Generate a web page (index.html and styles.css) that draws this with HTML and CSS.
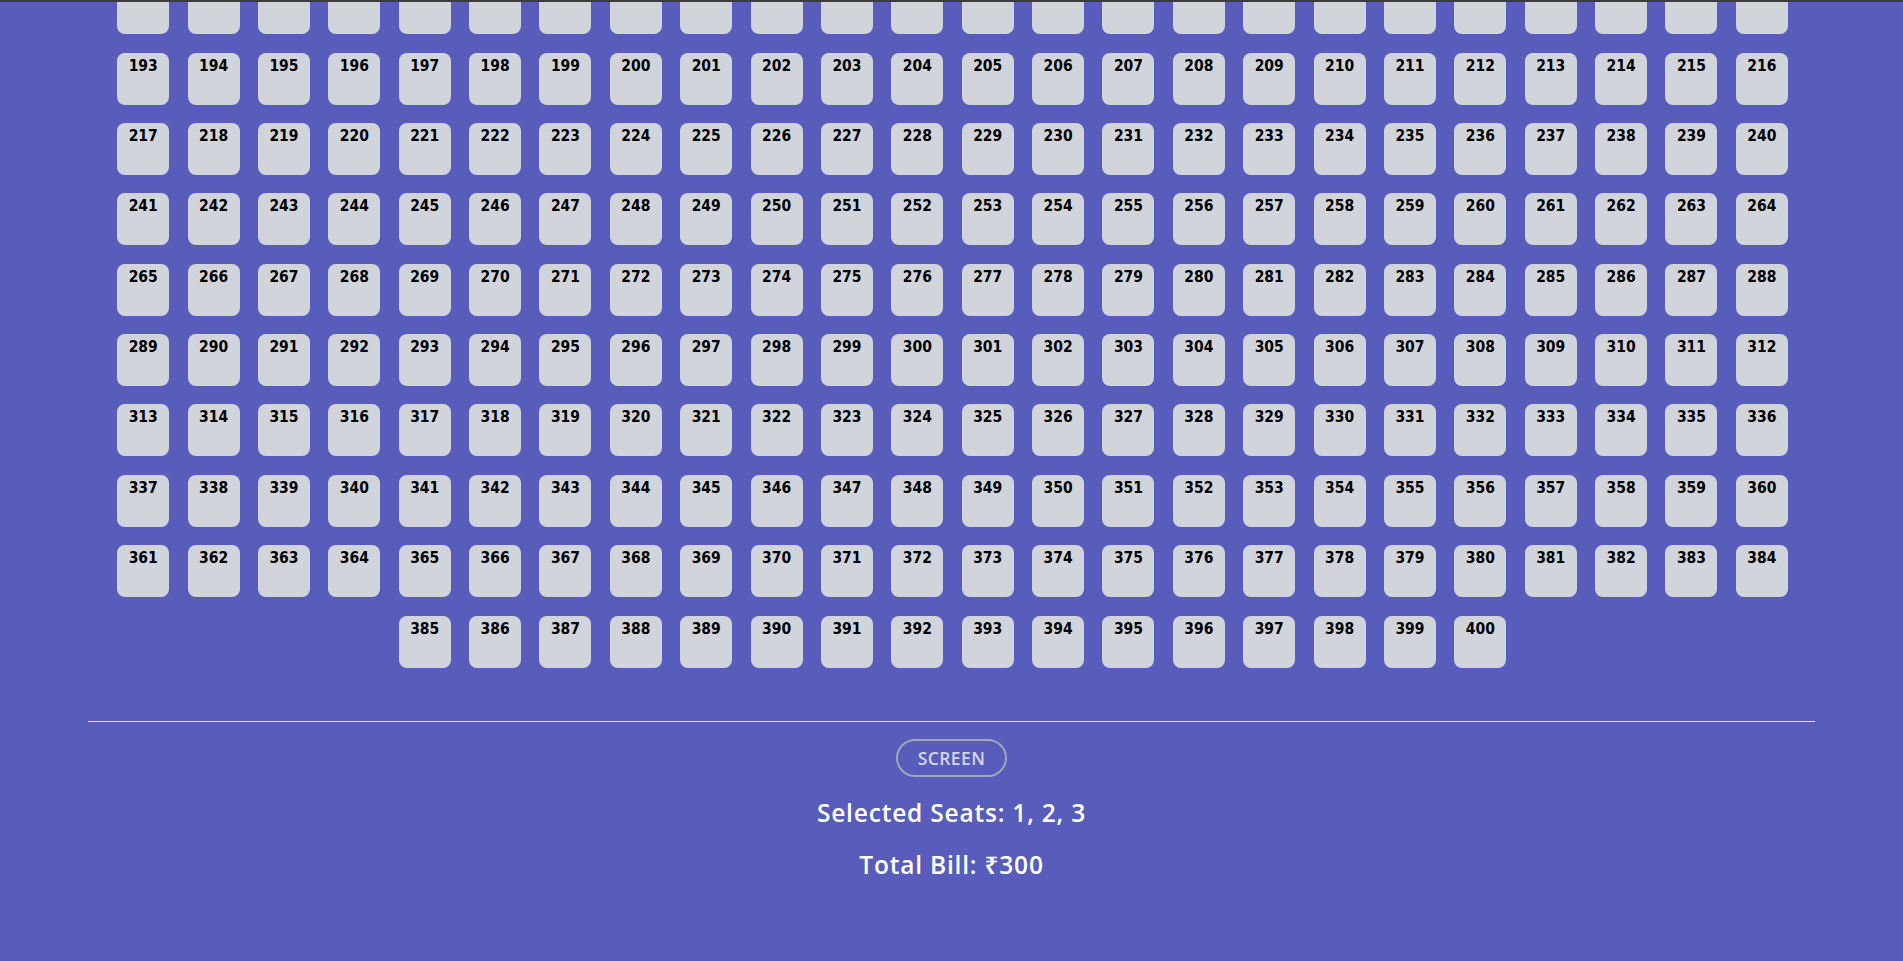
FILE: index.html
```html
<!DOCTYPE html>
<html lang="en">
<head>
<meta charset="utf-8">
<title>Seat Booking</title>
<link rel="stylesheet" href="styles.css">
</head>
<body>
<div class="topbar"></div>
<main class="page">
  <section class="seat-map">
    <div class="seat">169</div><div class="seat">170</div><div class="seat">171</div><div class="seat">172</div><div class="seat">173</div><div class="seat">174</div><div class="seat">175</div><div class="seat">176</div><div class="seat">177</div><div class="seat">178</div><div class="seat">179</div><div class="seat">180</div><div class="seat">181</div><div class="seat">182</div><div class="seat">183</div><div class="seat">184</div><div class="seat">185</div><div class="seat">186</div><div class="seat">187</div><div class="seat">188</div><div class="seat">189</div><div class="seat">190</div><div class="seat">191</div><div class="seat">192</div>
    <div class="seat">193</div><div class="seat">194</div><div class="seat">195</div><div class="seat">196</div><div class="seat">197</div><div class="seat">198</div><div class="seat">199</div><div class="seat">200</div><div class="seat">201</div><div class="seat">202</div><div class="seat">203</div><div class="seat">204</div><div class="seat">205</div><div class="seat">206</div><div class="seat">207</div><div class="seat">208</div><div class="seat">209</div><div class="seat">210</div><div class="seat">211</div><div class="seat">212</div><div class="seat">213</div><div class="seat">214</div><div class="seat">215</div><div class="seat">216</div>
    <div class="seat">217</div><div class="seat">218</div><div class="seat">219</div><div class="seat">220</div><div class="seat">221</div><div class="seat">222</div><div class="seat">223</div><div class="seat">224</div><div class="seat">225</div><div class="seat">226</div><div class="seat">227</div><div class="seat">228</div><div class="seat">229</div><div class="seat">230</div><div class="seat">231</div><div class="seat">232</div><div class="seat">233</div><div class="seat">234</div><div class="seat">235</div><div class="seat">236</div><div class="seat">237</div><div class="seat">238</div><div class="seat">239</div><div class="seat">240</div>
    <div class="seat">241</div><div class="seat">242</div><div class="seat">243</div><div class="seat">244</div><div class="seat">245</div><div class="seat">246</div><div class="seat">247</div><div class="seat">248</div><div class="seat">249</div><div class="seat">250</div><div class="seat">251</div><div class="seat">252</div><div class="seat">253</div><div class="seat">254</div><div class="seat">255</div><div class="seat">256</div><div class="seat">257</div><div class="seat">258</div><div class="seat">259</div><div class="seat">260</div><div class="seat">261</div><div class="seat">262</div><div class="seat">263</div><div class="seat">264</div>
    <div class="seat">265</div><div class="seat">266</div><div class="seat">267</div><div class="seat">268</div><div class="seat">269</div><div class="seat">270</div><div class="seat">271</div><div class="seat">272</div><div class="seat">273</div><div class="seat">274</div><div class="seat">275</div><div class="seat">276</div><div class="seat">277</div><div class="seat">278</div><div class="seat">279</div><div class="seat">280</div><div class="seat">281</div><div class="seat">282</div><div class="seat">283</div><div class="seat">284</div><div class="seat">285</div><div class="seat">286</div><div class="seat">287</div><div class="seat">288</div>
    <div class="seat">289</div><div class="seat">290</div><div class="seat">291</div><div class="seat">292</div><div class="seat">293</div><div class="seat">294</div><div class="seat">295</div><div class="seat">296</div><div class="seat">297</div><div class="seat">298</div><div class="seat">299</div><div class="seat">300</div><div class="seat">301</div><div class="seat">302</div><div class="seat">303</div><div class="seat">304</div><div class="seat">305</div><div class="seat">306</div><div class="seat">307</div><div class="seat">308</div><div class="seat">309</div><div class="seat">310</div><div class="seat">311</div><div class="seat">312</div>
    <div class="seat">313</div><div class="seat">314</div><div class="seat">315</div><div class="seat">316</div><div class="seat">317</div><div class="seat">318</div><div class="seat">319</div><div class="seat">320</div><div class="seat">321</div><div class="seat">322</div><div class="seat">323</div><div class="seat">324</div><div class="seat">325</div><div class="seat">326</div><div class="seat">327</div><div class="seat">328</div><div class="seat">329</div><div class="seat">330</div><div class="seat">331</div><div class="seat">332</div><div class="seat">333</div><div class="seat">334</div><div class="seat">335</div><div class="seat">336</div>
    <div class="seat">337</div><div class="seat">338</div><div class="seat">339</div><div class="seat">340</div><div class="seat">341</div><div class="seat">342</div><div class="seat">343</div><div class="seat">344</div><div class="seat">345</div><div class="seat">346</div><div class="seat">347</div><div class="seat">348</div><div class="seat">349</div><div class="seat">350</div><div class="seat">351</div><div class="seat">352</div><div class="seat">353</div><div class="seat">354</div><div class="seat">355</div><div class="seat">356</div><div class="seat">357</div><div class="seat">358</div><div class="seat">359</div><div class="seat">360</div>
    <div class="seat">361</div><div class="seat">362</div><div class="seat">363</div><div class="seat">364</div><div class="seat">365</div><div class="seat">366</div><div class="seat">367</div><div class="seat">368</div><div class="seat">369</div><div class="seat">370</div><div class="seat">371</div><div class="seat">372</div><div class="seat">373</div><div class="seat">374</div><div class="seat">375</div><div class="seat">376</div><div class="seat">377</div><div class="seat">378</div><div class="seat">379</div><div class="seat">380</div><div class="seat">381</div><div class="seat">382</div><div class="seat">383</div><div class="seat">384</div>
    <div class="seat">385</div><div class="seat">386</div><div class="seat">387</div><div class="seat">388</div><div class="seat">389</div><div class="seat">390</div><div class="seat">391</div><div class="seat">392</div><div class="seat">393</div><div class="seat">394</div><div class="seat">395</div><div class="seat">396</div><div class="seat">397</div><div class="seat">398</div><div class="seat">399</div><div class="seat">400</div>
  </section>
  <hr class="divider">
  <section class="summary">
    <div class="screen-pill">SCREEN</div>
    <p class="summary-line">Selected Seats: 1, 2, 3</p>
    <p class="summary-line">Total Bill: ₹300</p>
  </section>
</main>
</body>
</html>
```
FILE: styles.css
```css
* { box-sizing: border-box; }

html, body {
  margin: 0;
  padding: 0;
  background: #585cba;
}

body {
  font-family: "Open Sans", "Noto Sans", sans-serif;
  color: #ffffff;
  min-height: 961px;
}

.topbar {
  position: fixed;
  top: 0;
  left: 0;
  right: 0;
  height: 2px;
  background: #3c3c3c;
  z-index: 10;
}

.page {
  padding: 0 88px 60px;
}

.seat-map {
  display: flex;
  flex-wrap: wrap;
  justify-content: center;
  margin-top: -27px;
  padding-left: 2px;
}

.seat {
  width: 52px;
  height: 52px;
  margin: 9.2px;
  border-radius: 8px;
  background: #d1d5db;
  color: #000000;
  font-family: "DejaVu Sans Condensed", "DejaVu Sans", sans-serif;
  font-stretch: semi-condensed;
  font-weight: 700;
  font-size: 15.5px;
  line-height: 18px;
  text-align: center;
  padding-top: 4px;
}

.divider {
  margin: 44px 0 0;
  border: 0;
  height: 1px;
  background: #e6e6f2;
}

.summary {
  display: flex;
  flex-direction: column;
  align-items: center;
}

.screen-pill {
  margin-top: 17px;
  height: 38px;
  padding: 0 20px;
  display: flex;
  align-items: center;
  border: 2px solid #a3a6b8;
  border-radius: 999px;
  color: #d4d6e6;
  font-size: 17.5px;
  font-weight: 600;
  letter-spacing: 0.4px;
}

.summary-line {
  margin: 0;
  font-size: 24.5px;
  font-weight: 600;
  letter-spacing: 0.8px;
  line-height: 32px;
}

.screen-pill + .summary-line {
  margin-top: 20px;
}

.summary-line + .summary-line {
  margin-top: 20px;
}
```
